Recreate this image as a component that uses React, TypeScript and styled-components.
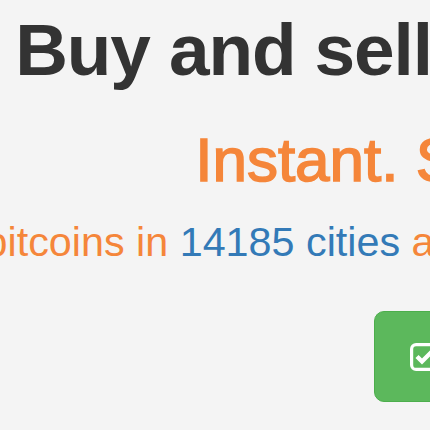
import React from "react";
import styled, { createGlobalStyle } from "styled-components";

const Global = createGlobalStyle`
  html, body {
    margin: 0;
    padding: 0;
    overflow: hidden;
    background: #f4f4f4;
  }
  body {
    font-family: "Liberation Sans", Arial, Helvetica, sans-serif;
  }
`;

const Page = styled.main`
  width: 1052px;
  padding-top: 11px;
  background: #f4f4f4;
`;

const Line = styled.div`
  display: flex;
  justify-content: center;
  white-space: nowrap;
`;

const Title = styled(Line).attrs({ as: "h1" })`
  margin: 0;
  font-size: 73px;
  line-height: 78px;
  font-weight: 700;
  letter-spacing: -1.1px;
  color: #333333;
`;

const Tagline = styled(Line).attrs({ as: "h2" })`
  margin: 37px 0 0;
  font-size: 62px;
  line-height: 68px;
  font-weight: 400;
  color: #f5863a;
  -webkit-text-stroke: 1.6px #f5863a;
`;

const Lead = styled(Line).attrs({ as: "p" })`
  margin: 25px 0 0;
  font-size: 41.3px;
  line-height: 46px;
  font-weight: 400;
`;

const Sentence = styled.span`
  flex: none;
`;

const Word = styled.span<{ $tone: "orange" | "blue" }>`
  color: ${(p) => (p.$tone === "orange" ? "#f5863a" : "#337ab7")};
`;

const Actions = styled.div`
  margin-top: 46px;
  display: flex;
  justify-content: center;
`;

const SignupButton = styled.a`
  box-sizing: border-box;
  width: 304px;
  height: 91px;
  display: inline-flex;
  align-items: center;
  justify-content: center;
  gap: 10px;
  background: #5cb85c;
  border: 1px solid #4cae4c;
  border-radius: 10px;
  color: #ffffff;
  font-size: 36px;
  text-decoration: none;
  white-space: nowrap;
`;

const CheckIcon = () => (
  <svg width="28" height="28" viewBox="0 0 28 28" aria-hidden="true">
    <rect x="1.6" y="1.6" width="24.8" height="24.8" rx="4.5" fill="none" stroke="#fff" strokeWidth="3.2" />
    <path d="M7 13.5 L12 18.5 L21.5 9" fill="none" stroke="#fff" strokeWidth="4.4" strokeLinecap="butt" strokeLinejoin="miter" />
  </svg>
);

export default function App() {
  return (
    <>
      <Global />
      <Page>
        <Title>
          <Sentence>Buy and sell bitcoins near you</Sentence>
        </Title>
        <Tagline>
          <Sentence>Instant. Secure. Private.</Sentence>
        </Tagline>
        <Lead>
          <Sentence>
            <Word $tone="orange">Trade bitcoins in </Word>
            <Word $tone="blue">14185 cities</Word>
            <Word $tone="orange"> and </Word>
            <Word $tone="blue">248 countries</Word>
            <Word $tone="orange"> including </Word>
            <Word $tone="blue">United States.</Word>
          </Sentence>
        </Lead>
        <Actions>
          <SignupButton href="#">
            <CheckIcon />
            Sign up free
          </SignupButton>
        </Actions>
      </Page>
    </>
  );
}
